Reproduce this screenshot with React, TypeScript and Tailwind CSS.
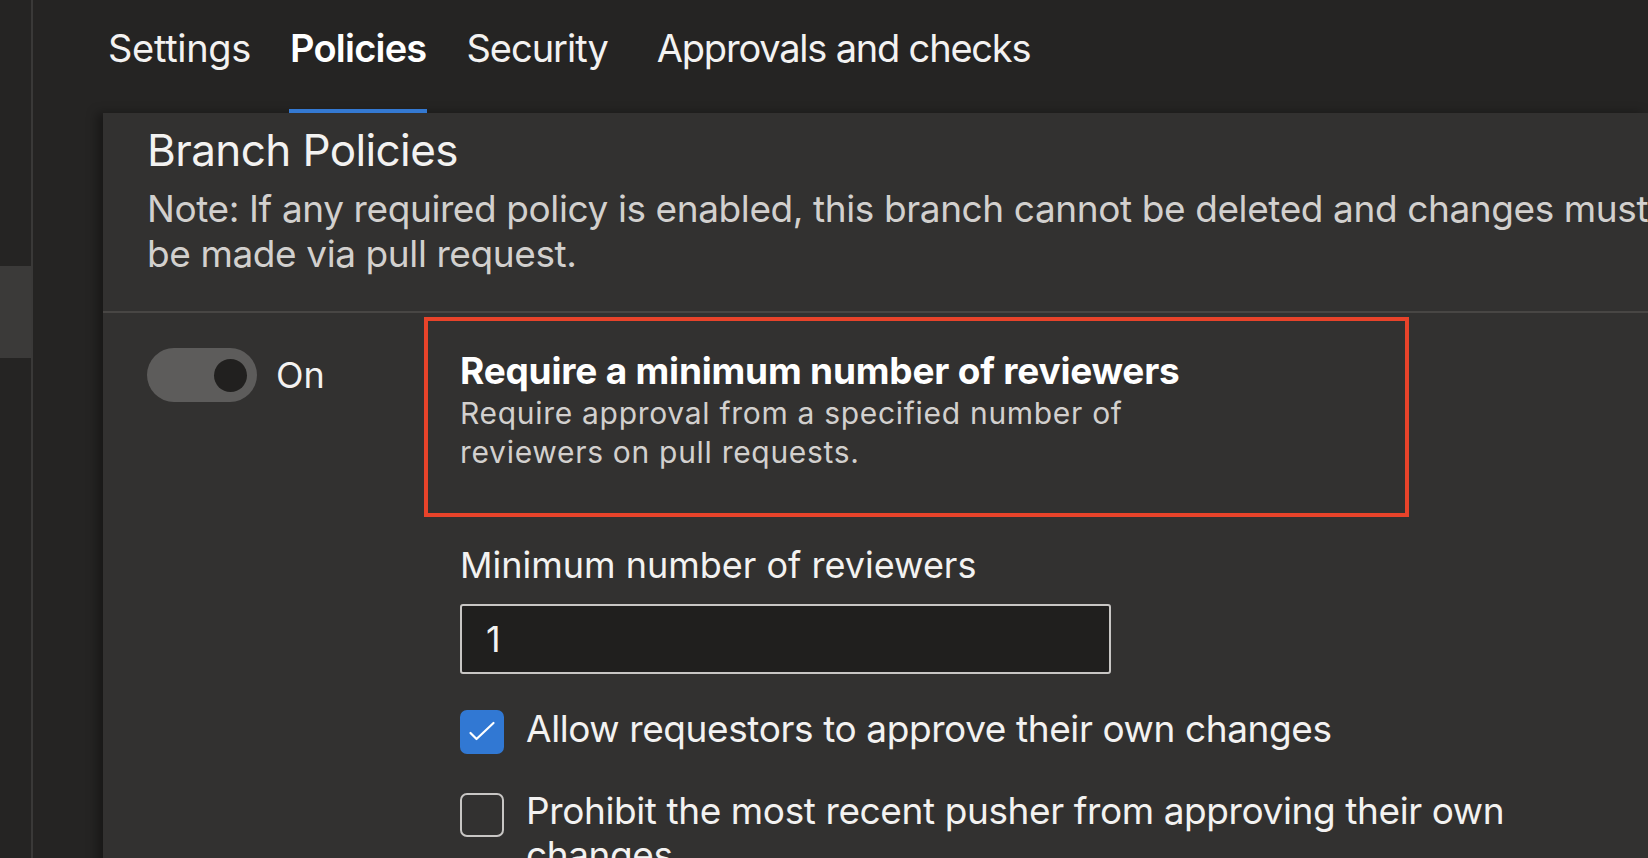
import React from "react";

function Tab({
  label,
  active,
  className,
  textClass,
}: {
  label: string;
  active?: boolean;
  className?: string;
  textClass?: string;
}) {
  return (
    <div className={`relative flex h-full flex-col ${className ?? ""}`}>
      <div
        className={`pt-[24px] text-[38px] leading-[48px] ${textClass ?? ""} ${
          active ? "font-semibold text-white" : "font-normal text-[#f3f2f1]"
        }`}
      >
        {label}
      </div>
      {active && <div className="absolute bottom-0 left-[-1px] right-[-1px] h-[4px] bg-[#3479d2]" />}
    </div>
  );
}

export default function App() {
  return (
    <div
      className="flex h-[858px] w-full overflow-hidden bg-[#252423]"
      style={{ fontFamily: "Inter, 'Noto Sans', sans-serif" }}
    >
      {/* left rail */}
      <div className="w-[31px] shrink-0 bg-[#252423]">
        <div className="mt-[266px] h-[92px] bg-[#3b3a39]" />
      </div>
      <div className="w-[2px] shrink-0 bg-[#3a3938]" />

      {/* main */}
      <div className="flex min-w-0 flex-1 flex-col">
        {/* tabs */}
        <div className="flex h-[113px] shrink-0 pl-[75px]">
          <Tab label="Settings" textClass="tracking-[-0.3px]" />
          <Tab label="Policies" active className="ml-[39px]" textClass="tracking-[-0.8px]" />
          <Tab label="Security" className="ml-[40px]" textClass="tracking-[-1px]" />
          <Tab label="Approvals and checks" className="ml-[49px]" textClass="tracking-[-1.2px]" />
        </div>

        {/* panel */}
        <div className="ml-[70px] flex-1 bg-[#323130] shadow-[-6px_0_10px_rgba(0,0,0,0.35)]">
          <div className="pl-[44px] pt-[10px] pb-[35px]">
            <div className="text-[44px] font-normal leading-[55px] tracking-[-0.6px] text-[#f3f2f1]">
              Branch Policies
            </div>
            <div className="mt-[8px] whitespace-nowrap text-[37px] leading-[45px] tracking-[-0.4px] text-[#d2d0ce]">
              Note: If any required policy is enabled, this branch cannot be deleted and changes must
              <br />
              be made via pull request.
            </div>
          </div>
          <div className="h-[2px] bg-[#484644]" />

          <div className="flex pl-[44px]">
            {/* toggle column */}
            <div className="mt-[35px] flex h-[54px] w-[277px] shrink-0 items-center">
              <div className="flex h-[54px] w-[110px] items-center justify-end rounded-full bg-[#5d5c5b] pr-[10px]">
                <div className="h-[33px] w-[33px] rounded-full bg-[#21201f]" />
              </div>
              <span className="ml-[19px] text-[36px] leading-[44px] text-[#f3f2f1]">On</span>
            </div>

            {/* policy column */}
            <div className="flex flex-col pt-[4px]">
              <div className="h-[200px] w-[985px] border-4 border-[#e8432a] pl-[32px] pt-[30px]">
                <div className="text-[37px] font-bold leading-[40px] tracking-[-0.2px] text-white">
                  Require a minimum number of reviewers
                </div>
                <div className="mt-[3px] max-w-[720px] text-[30px] leading-[39px] tracking-[0.7px] text-[#d2d0ce]">
                  Require approval from a specified number of reviewers on pull requests.
                </div>
              </div>

              <div className="pl-[36px]">
                <div className="mt-[26px] text-[36px] leading-[44px] tracking-[0px] text-[#f3f2f1]">
                  Minimum number of reviewers
                </div>
                <div className="mt-[17px] flex h-[70px] w-[651px] items-center rounded-[3px] border-2 border-[#c8c6c4] bg-[#201f1e] pl-[24px] text-[36px] text-[#f3f2f1]">
                  1
                </div>

                <div className="mt-[36px] flex items-start">
                  <div className="h-[44px] w-[44px] shrink-0 rounded-[7px] bg-[#3178d3]">
                    <svg width="44" height="44" viewBox="0 0 44 44" fill="none">
                      <path d="M10.5 23 L16.5 29 L33.5 13" stroke="white" strokeWidth="2.2" strokeLinecap="round" strokeLinejoin="round" />
                    </svg>
                  </div>
                  <div className="ml-[22px] mt-[-5px] text-[37px] leading-[48px] tracking-[-0.4px] text-[#f3f2f1]">
                    Allow requestors to approve their own changes
                  </div>
                </div>

                <div className="mt-[39px] flex items-start">
                  <div className="h-[44px] w-[44px] shrink-0 rounded-[7px] border-2 border-[#c8c6c4]" />
                  <div className="ml-[22px] mt-[-4px] max-w-[1060px] text-[37px] leading-[44px] tracking-[-0.4px] text-[#f3f2f1]">
                    Prohibit the most recent pusher from approving their own changes
                  </div>
                </div>
              </div>
            </div>
          </div>
        </div>
      </div>
    </div>
  );
}
